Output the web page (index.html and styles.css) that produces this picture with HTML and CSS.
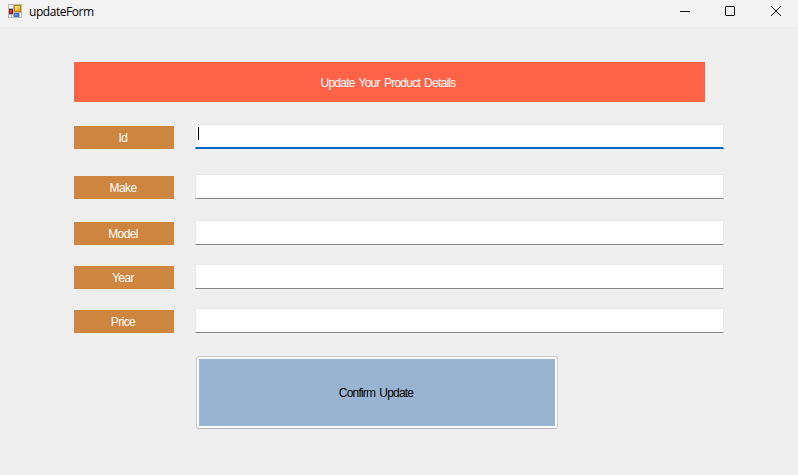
FILE: index.html
```html
<!DOCTYPE html>
<html lang="en">
<head>
<meta charset="utf-8">
<title>updateForm</title>
<link rel="stylesheet" href="styles.css">
</head>
<body>
<header class="titlebar">
  <svg class="app-icon" width="14" height="14" viewBox="0 0 14 14" shape-rendering="crispEdges">
    <defs>
      <linearGradient id="gold" x1="0" y1="0" x2="1" y2="1"><stop offset="0" stop-color="#fff0a0"/><stop offset="1" stop-color="#e5a300"/></linearGradient>
      <linearGradient id="red" x1="0" y1="0" x2="1" y2="1"><stop offset="0" stop-color="#e87060"/><stop offset="1" stop-color="#a80c0c"/></linearGradient>
      <linearGradient id="blue" x1="0" y1="0" x2="1" y2="1"><stop offset="0" stop-color="#92bbff"/><stop offset="1" stop-color="#2460ce"/></linearGradient>
    </defs>
    <path fill="#b9b9bb" d="M0 0h14v14H0z"/>
    <path fill="#f8f8f8" d="M1 1h4v3H1zM1 11h2v2H1zM4 11h1v2H4zM12 9h1v4h-1z"/>
    <path fill="#b98200" d="M6 1h7v7H6z"/><path fill="url(#gold)" d="M7 2h5v5H7z"/>
    <path fill="#8a1512" d="M1 5h4v5H1z"/><path fill="url(#red)" d="M2 6h2v3H2z"/>
    <path fill="#3c70cf" d="M6 9h5v4H6z"/><path fill="url(#blue)" d="M7 10h3v2H7z"/>
  </svg>
  <h1 class="title">updateForm</h1>
  <div class="controls">
    <svg width="10" height="10" viewBox="0 0 10 10"><path d="M0 5.5h10"/></svg>
    <svg width="10" height="10" viewBox="0 0 10 10"><rect x=".5" y=".5" width="9" height="9" rx=".5"/></svg>
    <svg width="10" height="10" viewBox="0 0 10 10"><path d="M0 0l10 10M10 0L0 10"/></svg>
  </div>
</header>
<main class="form">
  <div class="banner"><span class="text">Update Your Product Details</span></div>
  <div class="row row-id"><label class="label"><span class="text">Id</span></label><div class="field focused"><i class="caret"></i></div></div>
  <div class="row row-make"><label class="label"><span class="text">Make</span></label><div class="field"></div></div>
  <div class="row"><label class="label"><span class="text">Model</span></label><div class="field"></div></div>
  <div class="row"><label class="label"><span class="text">Year</span></label><div class="field"></div></div>
  <div class="row"><label class="label"><span class="text">Price</span></label><div class="field"></div></div>
  <button class="confirm"><span class="text">Confirm Update</span></button>
</main>
</body>
</html>
```
FILE: styles.css
```css
* { box-sizing: border-box; }
body {
  margin: 0;
  height: 475px;
  overflow: hidden;
  background: #efefef;
  font: 12px/16px "Liberation Sans", sans-serif;
}
.titlebar {
  display: flex;
  align-items: flex-start;
  height: 27px;
  padding: 4px 17px 0 8px;
  background: #f3f3f3;
}
.title {
  margin: 0 0 0 7px;
  font: 400 12px/16px "Open Sans", sans-serif;
  letter-spacing: -.45px;
  color: #000;
}
.controls {
  display: flex;
  gap: 35px;
  margin: 2px 0 0 auto;
}
.controls svg {
  fill: none;
  stroke: #111;
  stroke-width: 1;
}
.controls svg:nth-child(-n+2) { margin-left: -1px; margin-right: 1px; }
.form { padding: 35px 74px 0; }
.banner {
  display: flex;
  align-items: center;
  justify-content: center;
  width: 631px;
  height: 40px;
  padding: 2px 3px 0 0;
  margin-bottom: 22px;
  background: #ff6347;
  color: #fff;
}
.text {
  white-space: nowrap;
  letter-spacing: -.75px;
  word-spacing: 1.5px;
}
.row {
  display: flex;
  align-items: flex-end;
  gap: 21px;
  height: 25px;
  margin-bottom: 19px;
}
.row-id { margin-bottom: 25px; }
.row-make { margin-bottom: 21px; }
.label {
  display: flex;
  align-items: center;
  justify-content: center;
  width: 100px;
  height: 23px;
  padding: 1px 2px 0 0;
  background: #cd853f;
  color: #fff;
}
.label .text { letter-spacing: -.6px; }
.field {
  width: 529px;
  height: 25px;
  border: 1px solid #e9e9e9;
  border-bottom-color: #868686;
  background: #fff;
}
.focused {
  padding: 2px 0 0 2px;
  border-bottom: 2px solid #0067c0;
}
.caret {
  display: block;
  width: 1px;
  height: 13px;
  background: #000;
}
.confirm {
  display: flex;
  align-items: center;
  justify-content: center;
  width: 362px;
  height: 73px;
  margin: 23px 0 0 122px;
  padding: 2px;
  border: 1px solid #cacaca;
  border-bottom-color: #b9b9b9;
  border-radius: 3px;
  background: linear-gradient(#99b4d1, #99b4d1) content-box, #fff;
  font: inherit;
  color: #000;
}
.confirm .text {
  margin-right: 2px;
  letter-spacing: -.8px;
}
```
